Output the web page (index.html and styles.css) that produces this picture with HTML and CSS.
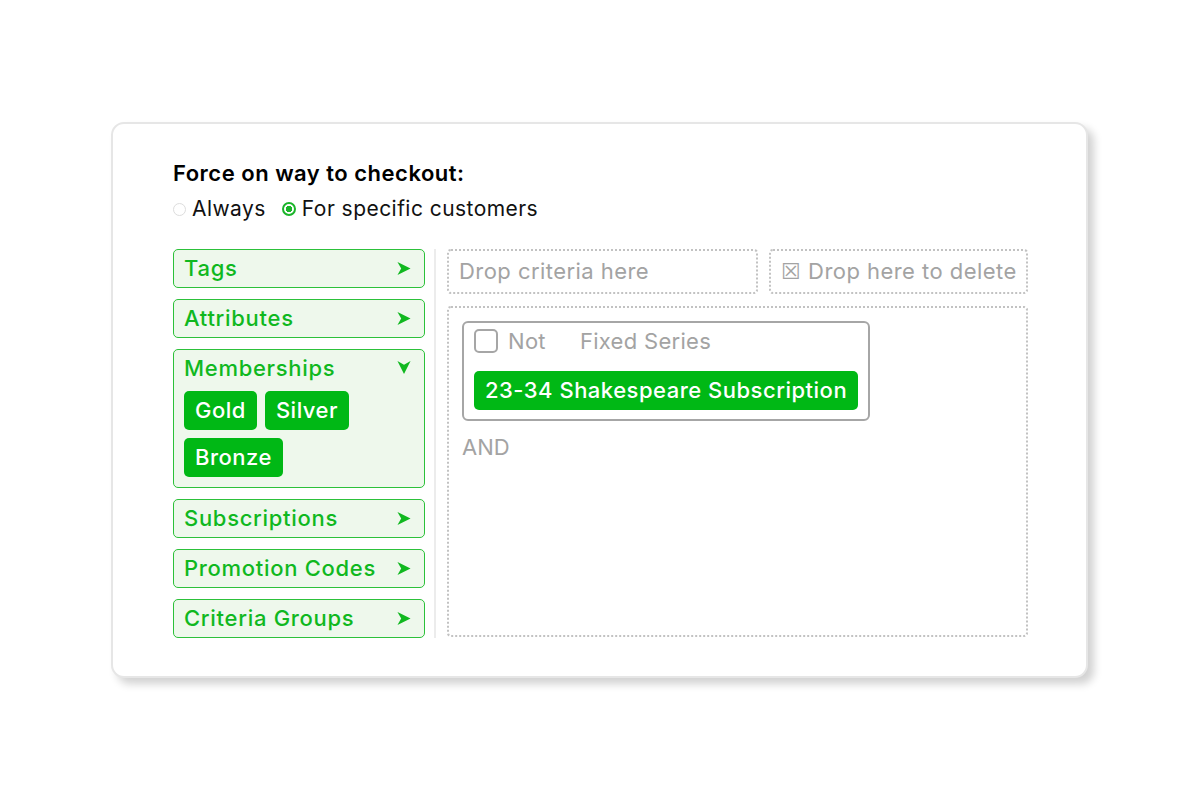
FILE: index.html
```html
<!DOCTYPE html>
<html>
<head>
<meta charset="utf-8">
<link rel="stylesheet" href="styles.css">
</head>
<body>
<div class="card">
  <div class="title">Force on way to checkout:</div>
  <div class="radios">
    <span class="radio"></span><span class="rlabel">Always</span>
    <span class="radio on"></span><span class="rlabel">For specific customers</span>
  </div>
  <div class="main">
    <div class="left">
      <div class="item"><span>Tags</span><svg class="arr" viewBox="0 0 16 16"><path d="M1 1 L15 8 L1 15 L5 8 Z"/></svg></div>
      <div class="item"><span>Attributes</span><svg class="arr" viewBox="0 0 16 16"><path d="M1 1 L15 8 L1 15 L5 8 Z"/></svg></div>
      <div class="item open">
        <div class="head"><span>Memberships</span><svg class="arr" viewBox="0 0 16 16"><path d="M1 1 L8 15 L15 1 L8 5 Z"/></svg></div>
        <div class="chips">
          <span class="chip">Gold</span><span class="chip">Silver</span><span class="chip">Bronze</span>
        </div>
      </div>
      <div class="item"><span>Subscriptions</span><svg class="arr" viewBox="0 0 16 16"><path d="M1 1 L15 8 L1 15 L5 8 Z"/></svg></div>
      <div class="item"><span>Promotion Codes</span><svg class="arr" viewBox="0 0 16 16"><path d="M1 1 L15 8 L1 15 L5 8 Z"/></svg></div>
      <div class="item"><span>Criteria Groups</span><svg class="arr" viewBox="0 0 16 16"><path d="M1 1 L15 8 L1 15 L5 8 Z"/></svg></div>
    </div>
    <div class="sep"></div>
    <div class="right">
      <div class="drops">
        <div class="drop wide">Drop criteria here</div>
        <div class="drop">☒ Drop here to delete</div>
      </div>
      <div class="area">
        <div class="crit">
          <div class="crow"><span class="cb"></span><span class="not">Not</span><span>Fixed Series</span></div>
          <span class="chip big">23-34 Shakespeare Subscription</span>
        </div>
        <div class="and">AND</div>
      </div>
    </div>
  </div>
</div>
</body>
</html>
```

FILE: styles.css
```css
html, body { margin: 0; padding: 0; background: #fff; }
body {
  font-family: Inter, "Open Sans", sans-serif;
  width: 1200px; height: 800px;
  padding-top: 122px; padding-left: 111px; box-sizing: border-box;
}
.card {
  width: 977px; height: 556px; box-sizing: border-box;
  border: 2px solid #e6e6e6; border-radius: 13px;
  box-shadow: 6px 6px 8px rgba(0,0,0,0.18);
  padding: 35px 0 0 60px;
  background: #fff;
}
.title { font-size: 22px; font-weight: 600; color: #000; letter-spacing: 0.5px; line-height: 28px; }
.radios { display: flex; align-items: center; margin-top: 9px; font-size: 21px; color: #111; line-height: 26px; letter-spacing: 0.45px; }
.radio { width: 13px; height: 13px; border: 1px solid #ddd; border-radius: 50%; box-sizing: border-box; margin-right: 6px; }
.radio.on { width: 14px; height: 14px; border: 2px solid #1bb52a; background: radial-gradient(circle, #1bb52a 0 3px, #fff 3.5px); }
.rlabel { margin-right: 16px; }
.main { display: flex; margin-top: 26.5px; }
.left { width: 252px; display: flex; flex-direction: column; gap: 11px; }
.item {
  height: 39px; box-sizing: border-box; border: 1px solid #2cc13a; border-radius: 5px;
  background: #eef8ec; color: #10b81f; font-size: 22px; font-weight: 500;
  display: flex; align-items: center; justify-content: space-between; padding: 0 12px 0 10px;
  letter-spacing: 0.7px;
}
.item.open { height: 139px; display: block; padding-top: 3px; }
.item .head { display: flex; align-items: center; justify-content: space-between; height: 30px; }
.arr { width: 16px; height: 15px; fill: #10b81f; }
.chips { display: flex; flex-wrap: wrap; gap: 8px; margin-top: 8px; width: 200px; }
.chip {
  background: #00b815; color: #fff; border-radius: 5px; font-size: 22px; font-weight: 500;
  height: 39px; line-height: 39px; padding: 0 11px; letter-spacing: 0.5px; white-space: nowrap;
}
.sep { width: 2px; background: #ececec; margin: 0 11px 0 9px; }
.right { width: 581px; display: flex; flex-direction: column; gap: 12px; }
.drops { display: flex; gap: 11px; }
.drop {
  height: 45px; box-sizing: border-box; border: 2px dotted #c2c2c2; border-radius: 4px;
  color: #a3a3a3; font-size: 22px; display: flex; align-items: center; padding-left: 10px; flex: 1;
  letter-spacing: 0.45px;
}
.drop.wide { flex: 0 0 311px; }
.area { height: 331px; box-sizing: border-box; border: 2px dotted #c2c2c2; border-radius: 4px; padding: 13px 0 0 13px; }
.crit {
  width: 408px; height: 100px; box-sizing: border-box; border: 2px solid #a6a6a6; border-radius: 6px;
  padding: 3px 0 0 10px;
}
.crow { display: flex; align-items: center; color: #a3a3a3; font-size: 22px; height: 30px; letter-spacing: 0.3px; }
.cb { width: 24px; height: 24px; box-sizing: border-box; border: 2px solid #a6a6a6; border-radius: 5px; margin-right: 10px; }
.not { margin-right: 34px; }
.chip.big { display: inline-block; margin-top: 15px; }
.and { color: #a3a3a3; font-size: 22px; margin-top: 13px; }
```
